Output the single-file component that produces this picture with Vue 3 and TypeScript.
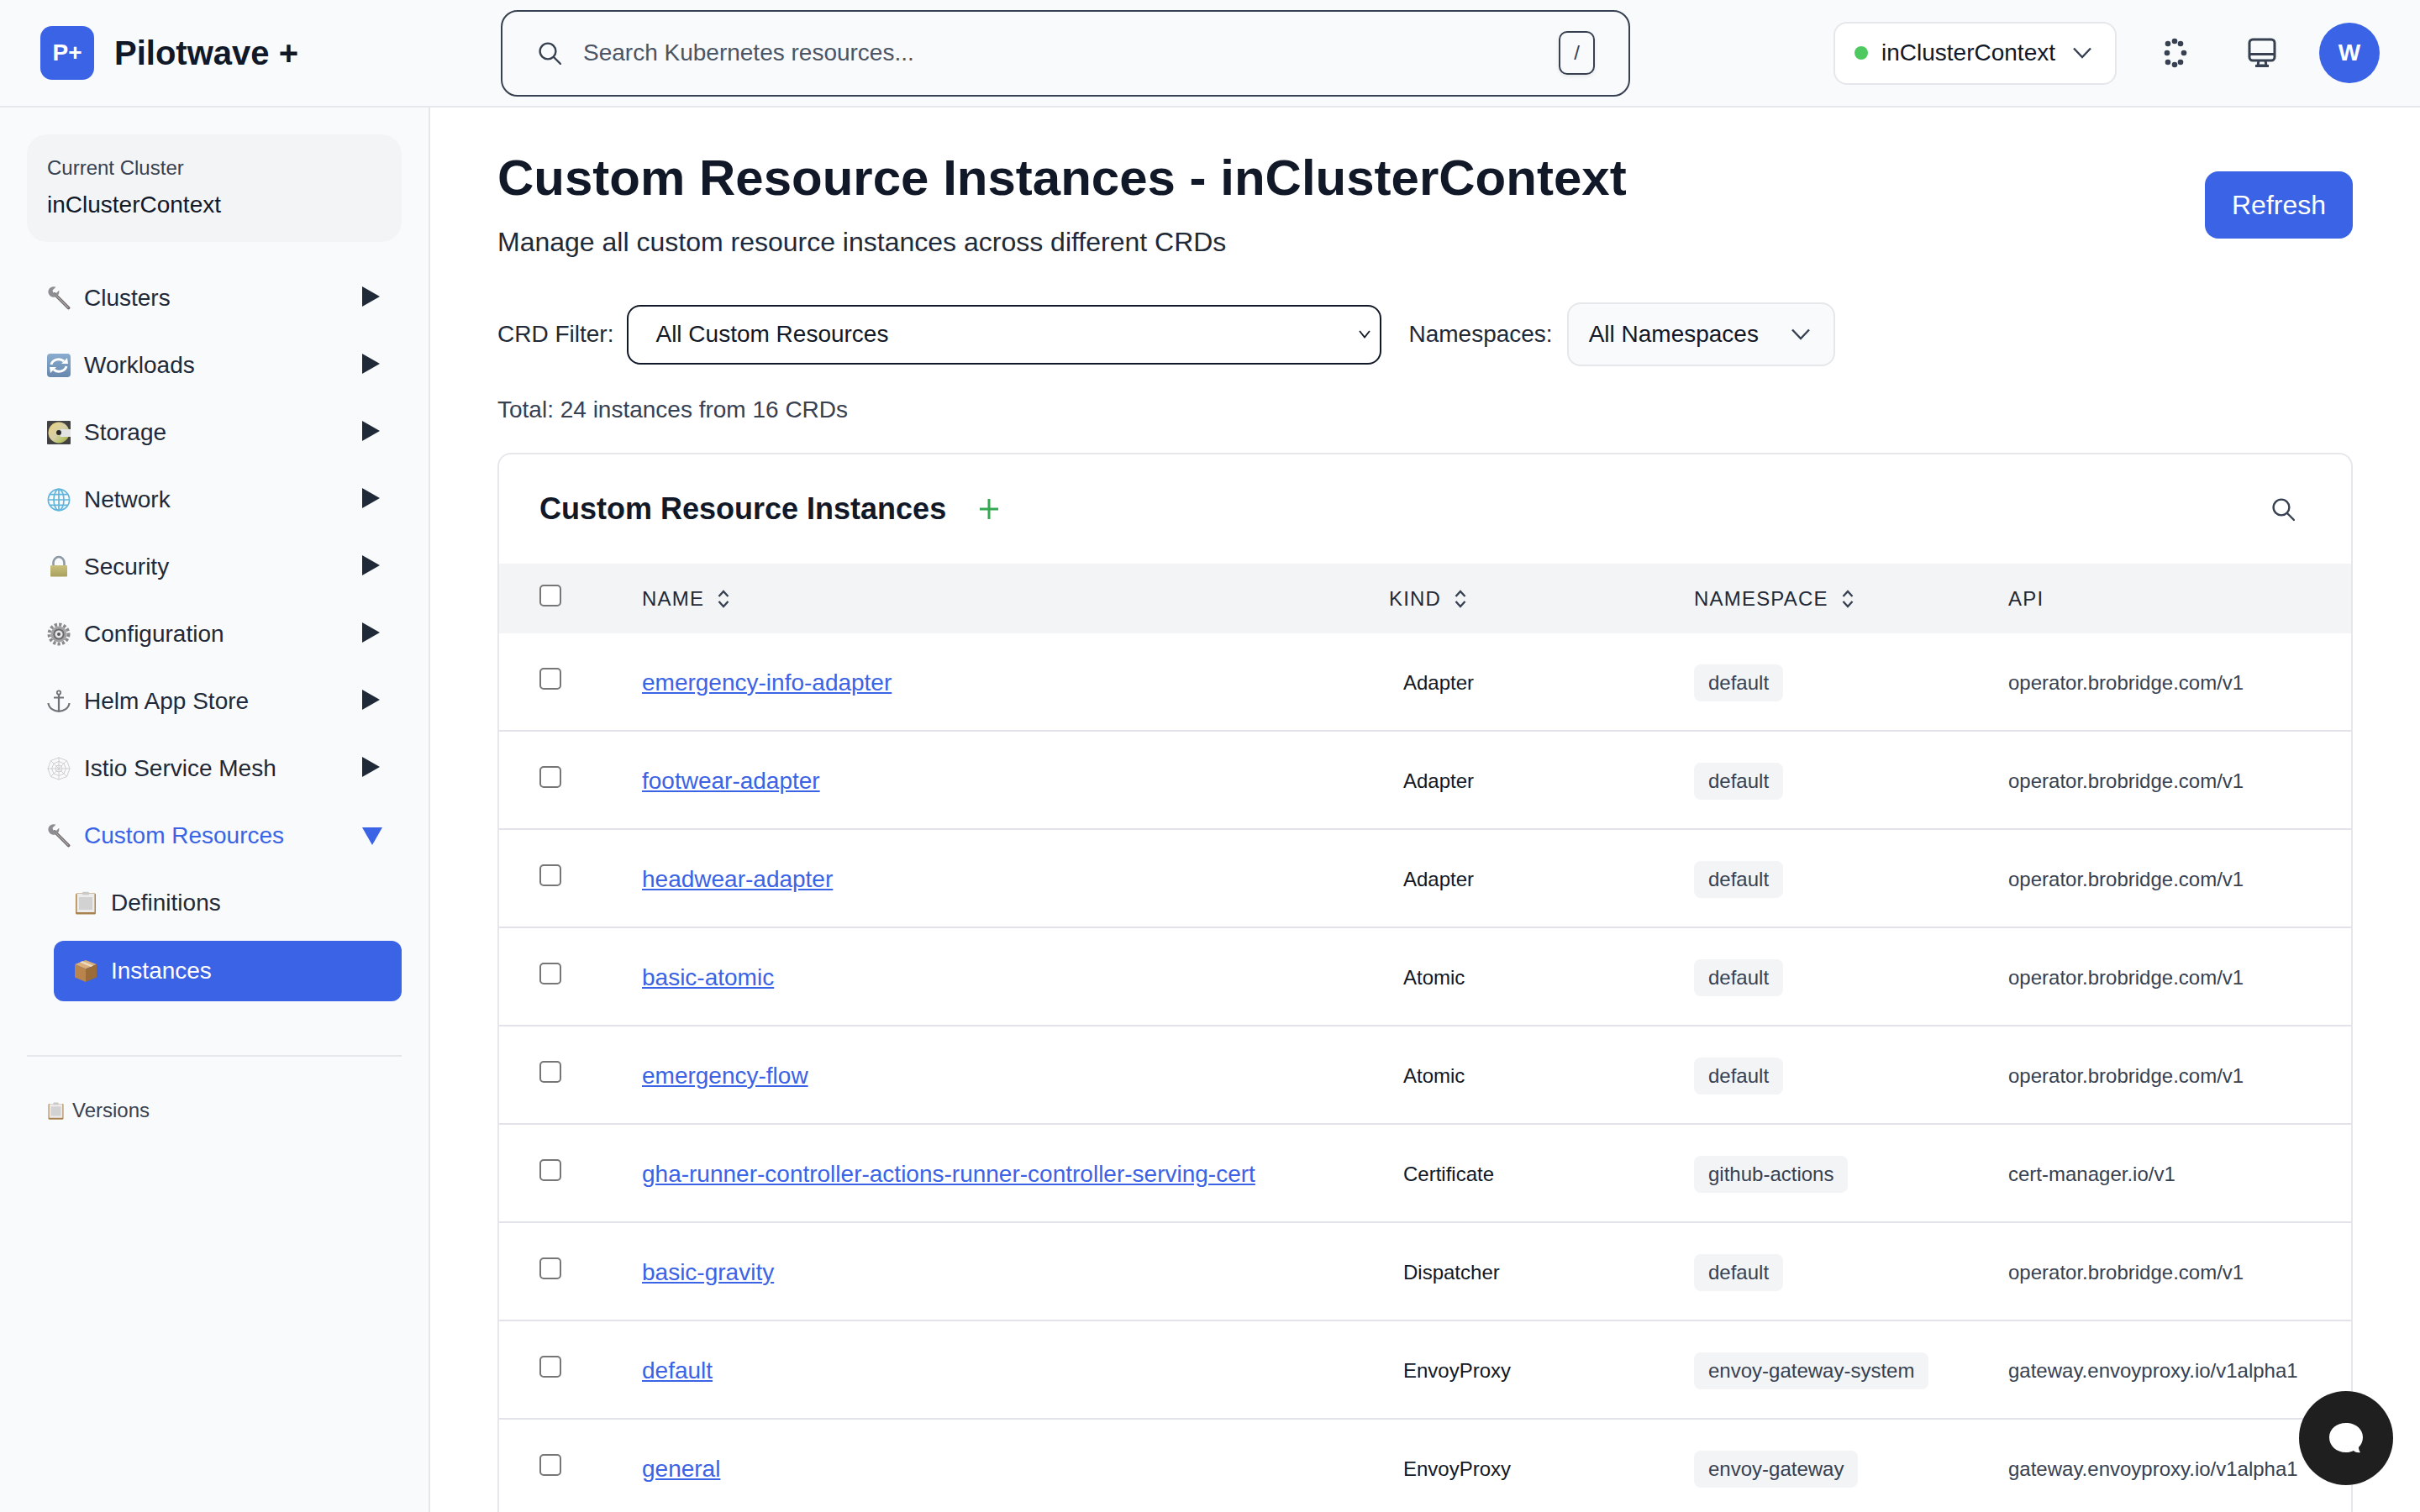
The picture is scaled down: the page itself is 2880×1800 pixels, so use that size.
<script setup lang="ts">
  interface NavItem {
    label: string;
    icon: string;
    open?: boolean;
  }

  const icons: Record<string, string> = {
    wrench: `<svg width="28" height="28" viewBox="0 0 28 28"><path d="M9 9 L25.5 25.5" stroke="#6b6567" stroke-width="3.8" stroke-linecap="round"/><path d="M10 10 L25 25" stroke="#b0abac" stroke-width="1.3" stroke-linecap="round"/><path d="M10.5 .8 L6.5 4.6 L7.4 7.6 L10.4 8.6 L14.2 4.8 A6.6 6.6 0 0 1 6 12.6 A6.6 6.6 0 0 1 1.6 4.8 A6.6 6.6 0 0 1 10.5 .8Z" fill="#8e8d92"/></svg>`,
    sync: `<svg width="28" height="28" viewBox="0 0 28 28"><defs><linearGradient id="sy" x1="0" y1="0" x2="0" y2="1"><stop offset="0" stop-color="#8aaccf"/><stop offset="1" stop-color="#6688ad"/></linearGradient></defs><rect width="28" height="28" rx="4" fill="url(#sy)"/><path d="M5 13 A9 8 0 0 1 20 9" fill="none" stroke="#fff" stroke-width="3"/><path d="M23 15 A9 8 0 0 1 8 19" fill="none" stroke="#fff" stroke-width="3"/><path d="M17 12 L25 12 L24 5Z M11 16 L3 16 L4 23Z" fill="#fff"/></svg>`,
    disc: `<svg width="28" height="28" viewBox="0 0 28 28"><defs><linearGradient id="dc" x1="0" y1="0" x2="1" y2="1"><stop offset="0" stop-color="#e9d27c"/><stop offset=".5" stop-color="#d6cfa8"/><stop offset=".75" stop-color="#b7c46a"/><stop offset="1" stop-color="#a8894a"/></linearGradient></defs><rect width="28" height="28" rx="1" fill="#424242"/><circle cx="14" cy="14" r="12.5" fill="url(#dc)"/><rect x="16" y="10" width="12" height="9" fill="#e4e4e4"/><circle cx="14" cy="14" r="3" fill="#2b2b2b"/></svg>`,
    globe: `<svg width="28" height="28" viewBox="0 0 28 28" fill="none" stroke="#62b5dc" stroke-width="1.7"><circle cx="14" cy="14" r="12.6"/><ellipse cx="14" cy="14" rx="6" ry="12.6"/><path d="M14 1.4 V26.6 M1.4 14 H26.6 M3.4 7.6 H24.6 M3.4 20.4 H24.6"/></svg>`,
    lock: `<svg width="28" height="28" viewBox="0 0 28 28"><defs><linearGradient id="lk" x1="0" y1="0" x2="0" y2="1"><stop offset="0" stop-color="#c9c07e"/><stop offset="1" stop-color="#a9a05c"/></linearGradient></defs><path d="M7.5 13 V9 A6.5 7 0 0 1 20.5 9 V13" fill="none" stroke="#8e99a6" stroke-width="2.6"/><rect x="4" y="12" width="20" height="13.5" rx="1" fill="url(#lk)"/></svg>`,
    gear: `<svg width="28" height="28" viewBox="0 0 28 28" fill="none"><circle cx="14" cy="14" r="11.5" stroke="#8a8a8d" stroke-width="4" stroke-dasharray="3.2 2.2"/><circle cx="14" cy="14" r="9.5" fill="#a2a2a5"/><circle cx="14" cy="14" r="5.6" fill="#e7e7e7" stroke="#6b6b6e" stroke-width="2"/><circle cx="14" cy="14" r="2" fill="#555"/></svg>`,
    anchor: `<svg width="28" height="28" viewBox="0 0 28 28" fill="none" stroke="#6f7378" stroke-width="1.8"><circle cx="14" cy="3.5" r="2.2"/><path d="M14 6 V25 M8 9.5 H20" stroke-width="2.2"/><path d="M1.5 16 C2 22 8 25.5 14 25.8 C20 25.5 26 22 26.5 16" stroke-width="2.2"/></svg>`,
    web: `<svg width="28" height="28" viewBox="0 0 28 28" fill="none" stroke="#cfcfcf" stroke-width="1"><path d="M14 .5 V27.5 M.5 14 H27.5 M4.5 4.5 L23.5 23.5 M23.5 4.5 L4.5 23.5"/><path d="M14 1 L23.5 4.5 L27 14 L23.5 23.5 L14 27 L4.5 23.5 L1 14 L4.5 4.5Z"/><path d="M14 5.5 L20 8 L22.5 14 L20 20 L14 22.5 L8 20 L5.5 14 L8 8Z"/><path d="M14 10 L17 11 L18 14 L17 17 L14 18 L11 17 L10 14 L11 11Z"/></svg>`,
    clipboard: `<svg width="28" height="28" viewBox="0 0 28 28"><rect x="2" y="2.5" width="24" height="25" rx="1.5" fill="#a9834f"/><rect x="3.5" y="3" width="21" height="22" fill="#ececec"/><rect x="6" y="7" width="16" height="15" fill="#d2d2d2"/><rect x="10" y="0.8" width="8" height="3.4" rx="1" fill="#c9c9c9"/></svg>`,
    box: `<svg width="28" height="28" viewBox="0 0 28 28"><path d="M14 1 L27 6 L14 11.5 L1 6Z" fill="#d9ae78"/><path d="M1 6 L14 11.5 V27 L1 21.5Z" fill="#b9854d"/><path d="M27 6 L14 11.5 V27 L27 21.5Z" fill="#9b6b38"/><path d="M7 3.5 L20 9 L23 7.6 L10 2.3Z" fill="#ecdcc3"/></svg>`,
  };

  const navItems: NavItem[] = [
    { label: "Clusters", icon: "wrench" },
    { label: "Workloads", icon: "sync" },
    { label: "Storage", icon: "disc" },
    { label: "Network", icon: "globe" },
    { label: "Security", icon: "lock" },
    { label: "Configuration", icon: "gear" },
    { label: "Helm App Store", icon: "anchor" },
    { label: "Istio Service Mesh", icon: "web" },
    { label: "Custom Resources", icon: "wrench", open: true },
  ];

  const rows = [
    { name: "emergency-info-adapter", kind: "Adapter", ns: "default", api: "operator.brobridge.com/v1" },
    { name: "footwear-adapter", kind: "Adapter", ns: "default", api: "operator.brobridge.com/v1" },
    { name: "headwear-adapter", kind: "Adapter", ns: "default", api: "operator.brobridge.com/v1" },
    { name: "basic-atomic", kind: "Atomic", ns: "default", api: "operator.brobridge.com/v1" },
    { name: "emergency-flow", kind: "Atomic", ns: "default", api: "operator.brobridge.com/v1" },
    { name: "gha-runner-controller-actions-runner-controller-serving-cert", kind: "Certificate", ns: "github-actions", api: "cert-manager.io/v1" },
    { name: "basic-gravity", kind: "Dispatcher", ns: "default", api: "operator.brobridge.com/v1" },
    { name: "default", kind: "EnvoyProxy", ns: "envoy-gateway-system", api: "gateway.envoyproxy.io/v1alpha1" },
    { name: "general", kind: "EnvoyProxy", ns: "envoy-gateway", api: "gateway.envoyproxy.io/v1alpha1" },
  ];

  const spinnerDots = [
    [-8, -11], [0, -14], [7, -11], [-9, 0], [11, 0], [-8, 11], [0, 14], [7, 11],
  ];
</script>

<template>
  <div class="app">
    <header class="topbar">
      <div class="brand">
        <div class="logo">P+</div>
        <span class="brand-name">Pilotwave +</span>
      </div>
      <div class="search">
        <svg class="search-icon" width="28" height="28" viewBox="0 0 28 28" fill="none" stroke="#374151" stroke-width="2.4">
          <circle cx="12" cy="12" r="9.4" />
          <path d="M19 19 L27 27" stroke-linecap="round" />
        </svg>
        <span class="search-text">Search Kubernetes resources...</span>
        <kbd class="kbd">/</kbd>
      </div>
      <div class="top-right">
        <div class="cluster-select">
          <span class="dot"></span>
          <span class="cluster-name">inClusterContext</span>
          <svg width="22" height="14" viewBox="0 0 22 14" fill="none" stroke="#374151" stroke-width="2.4">
            <path d="M1 1.5 L11 12 L21 1.5" />
          </svg>
        </div>
        <button class="icon-btn" aria-label="Loading">
          <svg width="34" height="36" viewBox="-17 -18 34 36" fill="#374151">
            <circle v-for="(d, i) in spinnerDots" :key="i" :cx="d[0]" :cy="d[1]" r="3.3" />
          </svg>
        </button>
        <button class="icon-btn monitor" aria-label="Display">
          <svg width="34" height="36" viewBox="0 0 34 36" fill="none" stroke="#374151" stroke-width="3">
            <rect x="2" y="2" width="30" height="25" rx="4" />
            <path d="M2 19.5 H32" />
            <path d="M13 27 L12 33 H22 L21 27" />
            <path d="M9 33.5 H25" />
          </svg>
        </button>
        <div class="avatar">W</div>
      </div>
    </header>

    <div class="body">
      <aside class="sidebar">
        <div class="cluster-card">
          <div class="cluster-label">Current Cluster</div>
          <div class="cluster-value">inClusterContext</div>
        </div>

        <nav class="nav">
          <div v-for="item in navItems" :key="item.label" class="nav-item" :class="{ open: item.open }">
            <span class="emoji" v-html="icons[item.icon]"></span>
            <span class="nav-label">{{ item.label }}</span>
            <span class="arrow" :class="item.open ? 'arrow-down' : 'arrow-right'"></span>
          </div>
          <div class="sub-item">
            <span class="emoji" v-html="icons.clipboard"></span>
            <span>Definitions</span>
          </div>
          <div class="sub-item active">
            <span class="emoji" v-html="icons.box"></span>
            <span>Instances</span>
          </div>
        </nav>

        <div class="side-divider"></div>
        <div class="versions">
          <span class="emoji small" v-html="icons.clipboard"></span>
          <span>Versions</span>
        </div>
      </aside>

      <main class="main">
        <div class="page-head">
          <div>
            <h1>Custom Resource Instances - inClusterContext</h1>
            <p class="subtitle">Manage all custom resource instances across different CRDs</p>
          </div>
          <button class="refresh">Refresh</button>
        </div>

        <div class="filters">
          <span class="filter-label">CRD Filter:</span>
          <div class="crd-select">
            <span>All Custom Resources</span>
            <svg width="14" height="10" viewBox="0 0 14 10" fill="none" stroke="#111827" stroke-width="1.8">
              <path d="M1 1 L7 8.5 L13 1" />
            </svg>
          </div>
          <span class="filter-label ns-label">Namespaces:</span>
          <div class="ns-select">
            <span>All Namespaces</span>
            <svg width="22" height="14" viewBox="0 0 22 14" fill="none" stroke="#374151" stroke-width="2.4">
              <path d="M1 1.5 L11 12 L21 1.5" />
            </svg>
          </div>
        </div>

        <div class="total">Total: 24 instances from 16 CRDs</div>

        <section class="card">
          <div class="card-head">
            <h2>Custom Resource Instances</h2>
            <svg class="plus" width="26" height="24" viewBox="0 0 26 24" stroke="#34a853" stroke-width="3">
              <path d="M13 0 V24 M2 12 H24" />
            </svg>
            <svg class="card-search" width="28" height="28" viewBox="0 0 28 28" fill="none" stroke="#374151" stroke-width="2.4">
              <circle cx="12" cy="12" r="9.4" />
              <path d="M19 19 L27 27" stroke-linecap="round" />
            </svg>
          </div>

          <table>
            <colgroup>
              <col style="width: 170px" />
              <col style="width: 889px" />
              <col style="width: 363px" />
              <col style="width: 374px" />
              <col />
            </colgroup>
            <thead>
              <tr>
                <th class="check-cell"><input type="checkbox" /></th>
                <th>
                  <span class="th-inner">NAME
                    <svg width="14" height="22" viewBox="0 0 14 22" fill="none" stroke="#374151" stroke-width="2.4"><path d="M1.5 8 L7 2 L12.5 8 M1.5 14 L7 20 L12.5 14" /></svg>
                  </span>
                </th>
                <th>
                  <span class="th-inner">KIND
                    <svg width="14" height="22" viewBox="0 0 14 22" fill="none" stroke="#374151" stroke-width="2.4"><path d="M1.5 8 L7 2 L12.5 8 M1.5 14 L7 20 L12.5 14" /></svg>
                  </span>
                </th>
                <th>
                  <span class="th-inner">NAMESPACE
                    <svg width="14" height="22" viewBox="0 0 14 22" fill="none" stroke="#374151" stroke-width="2.4"><path d="M1.5 8 L7 2 L12.5 8 M1.5 14 L7 20 L12.5 14" /></svg>
                  </span>
                </th>
                <th>API</th>
              </tr>
            </thead>
            <tbody>
              <tr v-for="row in rows" :key="row.name">
                <td class="check-cell"><input type="checkbox" /></td>
                <td><a class="link" href="#">{{ row.name }}</a></td>
                <td class="kind">{{ row.kind }}</td>
                <td><span class="tag">{{ row.ns }}</span></td>
                <td class="api">{{ row.api }}</td>
              </tr>
            </tbody>
          </table>
        </section>
      </main>
    </div>

    <button class="chat" aria-label="Chat">
      <svg width="42" height="38" viewBox="0 0 42 38" fill="#fff">
        <path d="M21 1 C32 1 41 8 41 18 C41 23 39 27 36 30 C36 32 37 35 38 36 C35 36.5 32 36 30 34 C27 35.5 24 36 21 36 C9 36 1 28 1 18 C1 8 10 1 21 1Z" />
      </svg>
    </button>
  </div>
</template>

<style>
  body {
    margin: 0;
    background: #fff;
  }
</style>

<style scoped>
  .app {
    position: relative;
    display: flex;
    flex-direction: column;
    height: 100vh;
    overflow: hidden;
    font-family: "Liberation Sans", Arial, sans-serif;
    color: #111827;
    background: #fff;
  }

  .topbar {
    display: flex;
    align-items: center;
    flex: none;
    box-sizing: border-box;
    height: 128px;
    padding: 0 48px;
    background: #f9fafb;
    border-bottom: 2px solid #e5e7eb;
  }

  .brand {
    display: flex;
    align-items: center;
    gap: 24px;
    width: 548px;
  }

  .logo {
    display: flex;
    align-items: center;
    justify-content: center;
    width: 64px;
    height: 64px;
    border-radius: 14px;
    background: #3b63e5;
    color: #fff;
    font-size: 28px;
    font-weight: 700;
  }

  .brand-name {
    font-size: 40px;
    font-weight: 700;
  }

  .search {
    display: flex;
    align-items: center;
    box-sizing: border-box;
    width: 1344px;
    height: 103px;
    padding: 0 40px 0 42px;
    border: 2px solid #374151;
    border-radius: 20px;
  }

  .search-text {
    margin-left: 26px;
    font-size: 28px;
    color: #4b5563;
  }

  .kbd {
    display: flex;
    align-items: center;
    justify-content: center;
    box-sizing: border-box;
    width: 43px;
    height: 52px;
    margin-left: auto;
    border: 2px solid #374151;
    border-radius: 10px;
    font-family: "Liberation Sans", Arial, sans-serif;
    font-size: 24px;
    color: #374151;
    box-shadow: 0 2px 4px rgba(0, 0, 0, 0.08);
  }

  .top-right {
    display: flex;
    align-items: center;
    gap: 41px;
    margin-left: auto;
  }

  .cluster-select {
    display: flex;
    align-items: center;
    box-sizing: border-box;
    width: 337px;
    height: 75px;
    padding: 0 28px 0 23px;
    background: #fff;
    border: 2px solid #e5e7eb;
    border-radius: 16px;
  }

  .dot {
    width: 16px;
    height: 16px;
    border-radius: 50%;
    background: #4ec95f;
  }

  .cluster-name {
    flex: 1;
    margin-left: 16px;
    font-size: 28px;
  }

  .icon-btn {
    display: flex;
    align-items: center;
    justify-content: center;
    width: 56px;
    height: 56px;
    padding: 0;
    background: none;
    border: none;
  }

  .icon-btn.monitor {
    margin-left: 7px;
    margin-right: -1px;
  }

  .avatar {
    display: flex;
    align-items: center;
    justify-content: center;
    width: 72px;
    height: 72px;
    border-radius: 50%;
    background: #3b63e5;
    color: #fff;
    font-size: 28px;
    font-weight: 700;
  }

  .body {
    display: flex;
    flex: 1;
    min-height: 0;
  }

  .sidebar {
    flex: none;
    box-sizing: border-box;
    width: 512px;
    padding: 32px;
    background: #f9fafb;
    border-right: 2px solid #e5e7eb;
  }

  .cluster-card {
    box-sizing: border-box;
    height: 128px;
    padding: 24px;
    border-radius: 24px;
    background: #f3f4f6;
  }

  .cluster-label {
    font-size: 24px;
    line-height: 32px;
    color: #374151;
  }

  .cluster-value {
    margin-top: 8px;
    font-size: 28px;
    line-height: 40px;
  }

  .nav {
    display: flex;
    flex-direction: column;
    margin-top: 27px;
  }

  .nav-item {
    display: flex;
    align-items: center;
    height: 80px;
    padding: 0 24px;
    font-size: 28px;
    color: #1f2937;
  }

  .nav-item.open {
    color: #3b63e5;
  }

  .emoji {
    display: flex;
    flex: none;
    width: 28px;
    height: 28px;
  }

  .nav-label {
    flex: 1;
    margin-left: 16px;
  }

  .arrow {
    width: 0;
    height: 0;
  }

  .arrow-right {
    margin-right: 2px;
    margin-bottom: 4px;
    border-top: 12px solid transparent;
    border-bottom: 12px solid transparent;
    border-left: 21px solid #1f2937;
  }

  .arrow-down {
    margin-right: -1px;
    border-left: 12px solid transparent;
    border-right: 12px solid transparent;
    border-top: 21px solid #3b63e5;
  }

  .sub-item {
    display: flex;
    align-items: center;
    gap: 16px;
    height: 72px;
    margin: 4px 0 4px 32px;
    padding: 0 24px;
    border-radius: 12px;
    font-size: 28px;
    color: #1f2937;
  }

  .sub-item.active {
    margin-top: 5px;
    background: #3b63e5;
    color: #fff;
  }

  .side-divider {
    height: 2px;
    margin-top: 60px;
    background: #e5e7eb;
  }

  .versions {
    display: flex;
    align-items: center;
    gap: 9px;
    margin-top: 48px;
    padding-left: 24px;
    font-size: 24px;
    line-height: 32px;
    color: #374151;
  }

  .emoji.small {
    zoom: 0.75;
  }

  .main {
    flex: 1;
    min-width: 0;
    padding: 48px 80px 0;
  }

  .page-head {
    display: flex;
    align-items: flex-start;
    justify-content: space-between;
  }

  h1 {
    margin: 0;
    font-size: 60px;
    line-height: 72px;
    font-weight: 700;
  }

  .subtitle {
    margin: 16px 0 0;
    font-size: 32px;
    line-height: 48px;
    color: #1f2937;
  }

  .refresh {
    width: 176px;
    height: 80px;
    margin-top: 28px;
    padding: 0;
    border: none;
    border-radius: 16px;
    background: #3b63e5;
    color: #fff;
    font-family: inherit;
    font-size: 32px;
  }

  .filters {
    display: flex;
    align-items: center;
    margin-top: 48px;
    font-size: 28px;
  }

  .filter-label {
    color: #1f2937;
  }

  .crd-select {
    display: flex;
    align-items: center;
    justify-content: space-between;
    box-sizing: border-box;
    width: 898px;
    height: 71px;
    margin-left: 16px;
    padding: 0 11px 0 32px;
    border: 2px solid #111827;
    border-radius: 16px;
  }

  .ns-label {
    margin-left: 32px;
  }

  .ns-select {
    display: flex;
    align-items: center;
    justify-content: space-between;
    box-sizing: border-box;
    width: 319px;
    height: 76px;
    margin-left: 17px;
    padding: 0 28px 0 24px;
    background: #f9fafb;
    border: 2px solid #e5e7eb;
    border-radius: 16px;
  }

  .total {
    margin-top: 32px;
    font-size: 28px;
    line-height: 40px;
    color: #374151;
  }

  .card {
    margin-top: 31px;
    border: 2px solid #e5e7eb;
    border-bottom: none;
    border-radius: 16px 16px 0 0;
    overflow: hidden;
  }

  .card-head {
    display: flex;
    align-items: center;
    height: 130px;
    padding: 0 48px;
  }

  h2 {
    margin: 0;
    font-size: 36px;
    font-weight: 700;
  }

  .plus {
    margin-left: 38px;
  }

  .card-search {
    margin-left: auto;
    margin-right: 19px;
  }

  table {
    width: 100%;
    border-collapse: collapse;
    table-layout: fixed;
    font-size: 24px;
  }

  thead tr {
    height: 83px;
    background: #f3f4f6;
  }

  th {
    padding: 0;
    text-align: left;
    font-weight: 400;
    letter-spacing: 1.2px;
    color: #1f2937;
  }

  .th-inner {
    display: inline-flex;
    align-items: center;
    gap: 16px;
  }

  tbody tr {
    height: 117px;
    border-bottom: 2px solid #e2e2ea;
  }

  tbody tr:first-child {
    height: 116px;
  }

  td {
    padding: 2px 0 0;
  }

  .check-cell {
    padding-left: 48px;
  }

  td.check-cell {
    padding-top: 0;
  }

  .check-cell input {
    display: block;
    appearance: none;
    box-sizing: border-box;
    width: 26px;
    height: 26px;
    margin: 0 0 8px;
    background: #fff;
    border: 2px solid #767676;
    border-radius: 5px;
  }

  .link {
    font-size: 28px;
    color: #3b63e5;
    text-decoration: underline;
  }

  .kind {
    padding-left: 17px;
    color: #111827;
  }

  .tag {
    display: inline-block;
    padding: 6px 17px;
    line-height: 32px;
    border-radius: 8px;
    background: #f3f4f6;
    color: #374151;
  }

  .api {
    color: #374151;
    white-space: nowrap;
  }

  .chat {
    position: absolute;
    right: 32px;
    bottom: 32px;
    display: flex;
    align-items: center;
    justify-content: center;
    width: 112px;
    height: 112px;
    padding: 0;
    border: none;
    border-radius: 50%;
    background: #1f1f1f;
  }
</style>
